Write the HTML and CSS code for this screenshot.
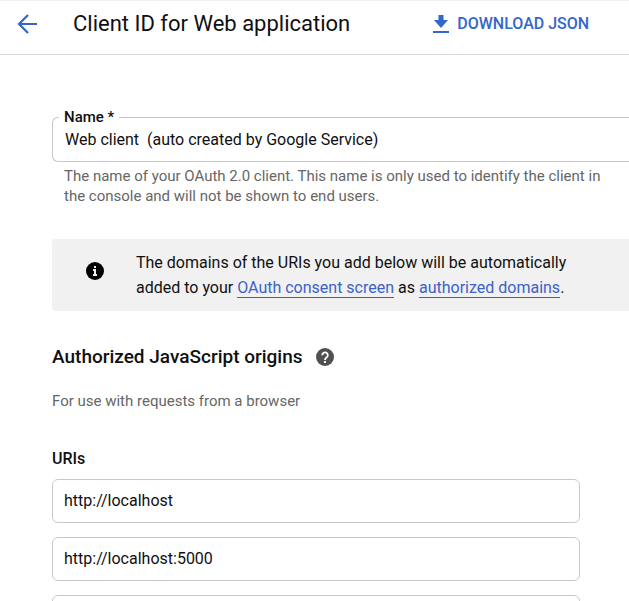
FILE: index.html
```html
<!DOCTYPE html>
<html lang="en">
<head>
<meta charset="utf-8">
<title>Client ID for Web application</title>
<link rel="stylesheet" href="styles.css">
</head>
<body>
<header class="topbar">
  <a class="back" href="#" aria-label="Back">
    <svg width="20" height="20" viewBox="0 0 20 20" fill="none" stroke="currentColor" stroke-width="2.200"><path d="M20 10H2M11 1L2 10l9 9"/></svg>
  </a>
  <h1 class="title">Client ID for Web application</h1>
  <button class="download" type="button">
    <svg width="16" height="18" viewBox="0 0 16 18" fill="currentColor"><path d="M5.500 0h5v5H15L8 13 1 5h4.500zM0 16h16v2H0z"/></svg>
    <span>DOWNLOAD JSON</span>
  </button>
</header>
<main class="content">
  <fieldset class="name-field">
    <legend class="legend"><label for="name">Name *</label></legend>
    <input class="name-input" id="name" type="text" value="Web client&nbsp; (auto created by Google Service)">
  </fieldset>
  <p class="hint">The name of your OAuth 2.0 client. This name is only used to identify the client in the console and will not be shown to end users.</p>
  <div class="notice">
    <svg class="notice-icon" width="18" height="18" viewBox="0 0 18 18"><circle cx="9" cy="9" r="9"/><path fill="#f1f1f1" d="M8 4h2v2H8zM7 7h3v5h1v2H7v-2h1V9H7z"/></svg>
    <p class="notice-text">The domains of the URIs you add below will be automatically added to your <a href="#">OAuth consent screen</a> as <a href="#">authorized domains</a>.</p>
  </div>
  <section class="origins">
    <div class="heading-row">
      <h2 class="heading">Authorized JavaScript origins</h2>
      <button class="help" type="button" aria-label="Help">
        <svg width="18" height="18" viewBox="0 0 18 18"><circle cx="9" cy="9" r="9" fill="#505050"/><path d="M6.200 7.200a2.800 2.700 0 1 1 4.700 1.900C9.700 10.100 9 10.400 9 12" fill="none" stroke="#fff" stroke-width="1.800"/><path fill="#fff" d="M8 13h2v2H8z"/></svg>
      </button>
    </div>
    <p class="description">For use with requests from a browser</p>
    <h3 class="subheading" id="uris">URIs</h3>
    <div class="uri-list">
      <input class="uri" type="text" aria-labelledby="uris" value="http://localhost">
      <input class="uri" type="text" aria-labelledby="uris" value="http://localhost:5000">
      <input class="uri" type="text" aria-labelledby="uris">
    </div>
  </section>
</main>
</body>
</html>
```
FILE: styles.css
```css
* {
  box-sizing: border-box;
}

html {
  height: 100%;
  overflow-x: hidden;
}

body {
  margin: 0;
  background: #fff;
  color: #101010;
  font: 16px/24px Roboto, sans-serif;
}

h1, h2, h3, p {
  margin: 0;
}

a {
  color: #3c62c8;
}

button {
  padding: 0;
  border: 0;
  background: none;
  font: inherit;
}

svg {
  display: block;
  flex: none;
}

.topbar {
  display: flex;
  align-items: center;
  height: 55px;
  padding: 0 16px 8px 17px;
  border-top: 1px solid #f1f1f1;
  border-bottom: 1px solid #dcdcdc;
}

.back {
  margin-right: 36px;
  color: #3466cc;
}

.title {
  font-size: 22px;
  font-weight: 400;
  line-height: 28px;
}

.download {
  display: flex;
  align-items: center;
  gap: 8px;
  margin-left: 83px;
  color: #3466cc;
  font-weight: 500;
}

.content {
  padding: 52px 0 0 52px;
}

.name-field {
  min-width: 0;
  margin: 0;
  padding: 0 12px;
  border: 1px solid #c8c8c8;
  border-right: 0;
  border-radius: 6px 0 0 6px;
}

.legend {
  margin-left: -6px;
  padding: 0 5px;
  font-size: 15px;
  font-weight: 500;
  line-height: 20px;
}

.name-input {
  display: block;
  width: 100%;
  height: 34px;
  padding: 0 0 10px;
  border: 0;
  background: none;
  color: inherit;
  font: inherit;
}

.hint {
  padding: 4px 24px 0 12px;
  color: #666;
  font-size: 15px;
  line-height: 20px;
}

.notice {
  display: flex;
  align-items: center;
  gap: 32px;
  margin-top: 33px;
  padding: 11px 48px 11px 34px;
  border-radius: 4px 0 0 4px;
  background: #f1f1f1;
}

.notice-icon {
  margin-top: -8px;
}

.notice-text {
  line-height: 25px;
}

.notice-text a {
  border-bottom: 1px solid #3466b8;
  text-decoration: none;
}

.origins {
  padding: 34px 49px 0 0;
}

.heading-row {
  display: flex;
  align-items: center;
  gap: 13px;
}

.heading {
  font-size: 19px;
  font-weight: 500;
  line-height: 24px;
}

.description {
  margin-top: 22px;
  color: #666;
  font-size: 15px;
  line-height: 20px;
}

.subheading {
  margin-top: 36px;
  font-size: 16px;
  font-weight: 500;
}

.uri-list {
  display: grid;
  gap: 14px;
  margin-top: 8px;
}

.uri {
  width: 100%;
  height: 44px;
  padding: 0 11px 2px;
  border: 1px solid #c8c8c8;
  border-radius: 6px;
  background: #fff;
  color: inherit;
  font: inherit;
}
```
